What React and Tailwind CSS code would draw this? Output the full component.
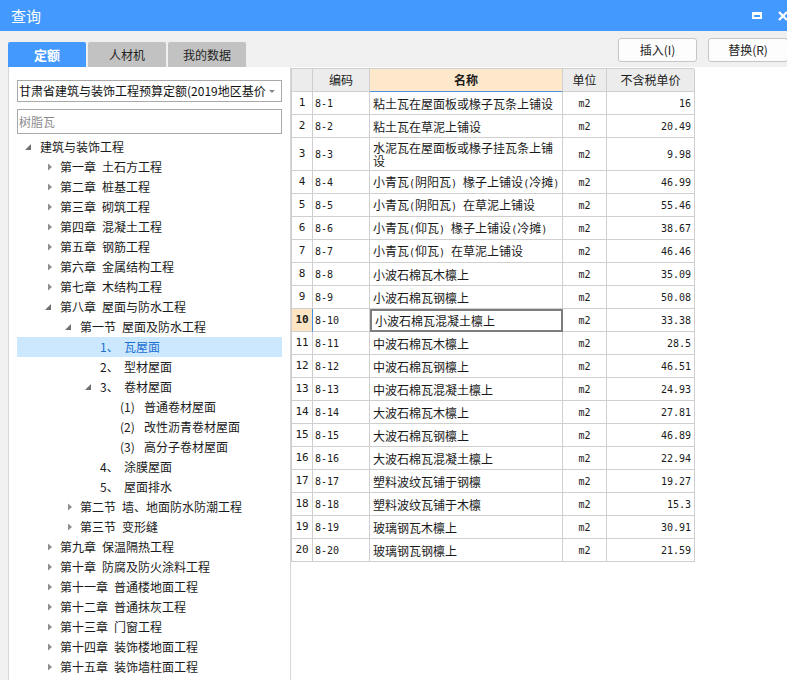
import React from "react";

const rows = [
  ["1", "8-1", "粘土瓦在屋面板或椽子瓦条上铺设", "16"],
  ["2", "8-2", "粘土瓦在草泥上铺设", "20.49"],
  ["3", "8-3", "水泥瓦在屋面板或椽子挂瓦条上铺设", "9.98"],
  ["4", "8-4", "小青瓦(阴阳瓦) 椽子上铺设(冷摊)", "46.99"],
  ["5", "8-5", "小青瓦(阴阳瓦) 在草泥上铺设", "55.46"],
  ["6", "8-6", "小青瓦(仰瓦) 椽子上铺设(冷摊)", "38.67"],
  ["7", "8-7", "小青瓦(仰瓦) 在草泥上铺设", "46.46"],
  ["8", "8-8", "小波石棉瓦木檩上", "35.09"],
  ["9", "8-9", "小波石棉瓦钢檩上", "50.08"],
  ["10", "8-10", "小波石棉瓦混凝土檩上", "33.38"],
  ["11", "8-11", "中波石棉瓦木檩上", "28.5"],
  ["12", "8-12", "中波石棉瓦钢檩上", "46.51"],
  ["13", "8-13", "中波石棉瓦混凝土檩上", "24.93"],
  ["14", "8-14", "大波石棉瓦木檩上", "27.81"],
  ["15", "8-15", "大波石棉瓦钢檩上", "46.89"],
  ["16", "8-16", "大波石棉瓦混凝土檩上", "22.94"],
  ["17", "8-17", "塑料波纹瓦铺于钢檩", "19.27"],
  ["18", "8-18", "塑料波纹瓦铺于木檩", "15.3"],
  ["19", "8-19", "玻璃钢瓦木檩上", "30.91"],
  ["20", "8-20", "玻璃钢瓦钢檩上", "21.59"],
];

// level, state: 'o' expanded, 'c' collapsed, '' leaf
const tree = [
  [0, "o", "建筑与装饰工程"],
  [1, "c", "第一章 土石方工程"],
  [1, "c", "第二章 桩基工程"],
  [1, "c", "第三章 砌筑工程"],
  [1, "c", "第四章 混凝土工程"],
  [1, "c", "第五章 钢筋工程"],
  [1, "c", "第六章 金属结构工程"],
  [1, "c", "第七章 木结构工程"],
  [1, "o", "第八章 屋面与防水工程"],
  [2, "o", "第一节 屋面及防水工程"],
  [3, "", "1、 瓦屋面", true],
  [3, "", "2、 型材屋面"],
  [3, "o", "3、 卷材屋面"],
  [4, "", "(1) 普通卷材屋面"],
  [4, "", "(2) 改性沥青卷材屋面"],
  [4, "", "(3) 高分子卷材屋面"],
  [3, "", "4、 涂膜屋面"],
  [3, "", "5、 屋面排水"],
  [2, "c", "第二节 墙、地面防水防潮工程"],
  [2, "c", "第三节 变形缝"],
  [1, "c", "第九章 保温隔热工程"],
  [1, "c", "第十章 防腐及防火涂料工程"],
  [1, "c", "第十一章 普通楼地面工程"],
  [1, "c", "第十二章 普通抹灰工程"],
  [1, "c", "第十三章 门窗工程"],
  [1, "c", "第十四章 装饰楼地面工程"],
  [1, "c", "第十五章 装饰墙柱面工程"],
];

const indent = {
  0: "pl-[7px]",
  1: "pl-[27px]",
  2: "pl-[47px]",
  3: "pl-[67px]",
  4: "pl-[87px]",
};

function Arrow({ state }) {
  if (state === "o")
    return (
      <svg width="16" height="20" viewBox="0 0 16 20" className="shrink-0">
        <path d="M1 13 L7 13 L7 7 Z" fill="#707070" />
      </svg>
    );
  if (state === "c")
    return (
      <svg width="16" height="20" viewBox="0 0 16 20" className="shrink-0">
        <path d="M4 6.5 L8 10 L4 13.5 Z" fill="#8e8e8e" />
      </svg>
    );
  return <span className="w-[16px] h-[20px] inline-block shrink-0" />;
}

function Label({ text }) {
  const idx = text.indexOf(" ");
  if (idx < 0) return <span className="leading-[20px]">{text}</span>;
  const pre = text.slice(0, idx);
  const rest = text.slice(idx + 1);
  const isNum = /^[0-9(]/.test(pre);
  return (
    <span className="leading-[20px] flex">
      <span className={isNum ? "w-[24px] inline-block" : ""}>{pre}</span>
      <span className={isNum ? "" : "ml-[6px]"}>{rest}</span>
    </span>
  );
}

function Name({ text }) {
  const parts = text.split(/([\x20-\x7e]+)/).filter(Boolean);
  return (
    <span>
      {parts.map((p, i) =>
        /^[\x20-\x7e]+$/.test(p) ? (
          <span key={i} className="font-['DejaVu_Sans_Mono','Liberation_Mono',monospace] text-[10px] whitespace-pre">
            {p}
          </span>
        ) : (
          <span key={i}>{p}</span>
        )
      )}
    </span>
  );
}

const mono = "font-['DejaVu_Sans_Mono','Liberation_Mono',monospace] text-[10px]";

export default function App() {
  return (
    <div className="w-[787px] h-[680px] bg-[#f0f0f0] flex flex-col overflow-hidden font-['Noto_Sans_CJK_SC','Noto_Sans',sans-serif] text-[12px] text-[#1a1a1a]">
      {/* title bar */}
      <div className="h-[31px] shrink-0 bg-[#4499ff] flex items-center justify-between pl-[11px]">
        <span className="text-white text-[15px] leading-none">查询</span>
        <div className="flex items-center gap-[16px]">
          <div className="w-[10px] h-[7px] border-2 border-white border-t-[3px]" />
          <svg width="12" height="10" viewBox="0 0 12 10" className="mr-[-3px]">
            <path d="M1 1 L9 9 M9 1 L1 9" stroke="white" strokeWidth="2.2" />
          </svg>
        </div>
      </div>

      {/* toolbar: tabs + buttons */}
      <div className="h-[36px] shrink-0 flex justify-between">
        <div className="flex items-end pl-[8px] gap-[2px]">
          <div className="w-[78px] h-[25px] bg-[#4499ff] rounded-t-[2px] flex items-center justify-center text-white font-bold text-[13px]">
            定额
          </div>
          <div className="w-[78px] h-[25px] bg-[#c2c2c2] rounded-t-[2px] flex items-center justify-center text-[#222]">
            人材机
          </div>
          <div className="w-[78px] h-[25px] bg-[#c2c2c2] rounded-t-[2px] flex items-center justify-center text-[#222]">
            我的数据
          </div>
        </div>
        <div className="flex items-start pt-[7px] gap-[11px] mr-[-1px]">
          <button className="w-[79px] h-[24px] bg-[#fdfdfd] border border-[#c6c6c6] rounded-[3px] text-[12px] text-[#222]">
            插入(I)
          </button>
          <button className="w-[80px] h-[24px] bg-[#fdfdfd] border border-[#c6c6c6] rounded-[3px] text-[12px] text-[#222]">
            替换(R)
          </button>
        </div>
      </div>

      {/* main */}
      <div className="flex flex-1 min-h-0">
        {/* left panel */}
        <div className="ml-[8px] w-[283px] bg-white border-l border-r border-[#d6d6d6] flex flex-col px-[8px] pt-[13px]">
          <div className="h-[22px] border border-[#a9a9a9] flex items-center justify-between pl-[1px] pr-[5px] overflow-hidden">
            <span className="whitespace-nowrap text-[#111]">甘肃省建筑与装饰工程预算定额(2019地区基价</span>
            <svg width="8" height="5" viewBox="0 0 8 5" className="shrink-0 ml-[2px]">
              <path d="M1 1 L7 1 L4 4 Z" fill="#8a8a8a" />
            </svg>
          </div>
          <div className="h-[25px] mt-[7px] border border-[#a9a9a9] flex items-center pl-[1px] text-[#8c8c8c]">
            树脂瓦
          </div>
          <div className="mt-[3px] flex flex-col">
            {tree.map(([lvl, st, label, sel], i) => (
              <div
                key={i}
                className={`h-[20px] flex items-center whitespace-nowrap ${indent[lvl]} ${
                  sel ? "bg-[#cce8ff] text-[#1a6fd1]" : ""
                }`}
              >
                <Arrow state={st} />
                <Label text={label} />
              </div>
            ))}
          </div>
        </div>

        {/* right panel */}
        <div className="flex-1 bg-white pt-[1px]">
          <div className="grid grid-cols-[21px_57px_193px_44px_88px] w-[403px] border-l border-t border-[#cfcfcf] text-[12px]">
            {/* header */}
            <div className="h-[23px] bg-[#ececec] border-r border-b border-[#cfcfcf]" />
            <div className="h-[23px] bg-[#ececec] border-r border-b border-[#cfcfcf] flex items-center justify-center">编码</div>
            <div className="h-[23px] bg-[#fde8cc] border-r border-b border-b-[#4a90e2] border-r-[#cfcfcf] flex items-center justify-center font-bold">名称</div>
            <div className="h-[23px] bg-[#ececec] border-r border-b border-[#cfcfcf] flex items-center justify-center">单位</div>
            <div className="h-[23px] bg-[#ececec] border-r border-b border-[#cfcfcf] flex items-center justify-center">不含税单价</div>
            {rows.map(([n, code, name, price]) => {
              const tall = n === "3";
              const h = tall ? "h-[33px]" : "h-[23px] whitespace-nowrap overflow-hidden";
              const active = n === "10";
              return (
                <React.Fragment key={n}>
                  <div
                    className={`${h} border-b border-r flex items-center justify-center ${mono} text-[11px] ${
                      active
                        ? "bg-[#fde5c4] border-b-[#cfcfcf] border-r-[#3d8fe8] font-bold"
                        : "border-[#cfcfcf]"
                    }`}
                  >
                    {n}
                  </div>
                  <div className={`${h} border-b border-r border-[#cfcfcf] flex items-center pl-[2px] ${mono}`}>{code}</div>
                  <div
                    className={`${h} flex items-center pl-[3px] pr-[2px] leading-[13px] ${
                      active ? "border-2 border-[#7d7d7d]" : "border-b border-r border-[#cfcfcf]"
                    }`}
                  >
                    <Name text={name} />
                  </div>
                  <div className={`${h} border-b border-r border-[#cfcfcf] flex items-center justify-center ${mono}`}>m2</div>
                  <div className={`${h} border-b border-r border-[#cfcfcf] flex items-center justify-end pr-[3px] ${mono}`}>{price}</div>
                </React.Fragment>
              );
            })}
          </div>
        </div>
      </div>
    </div>
  );
}
